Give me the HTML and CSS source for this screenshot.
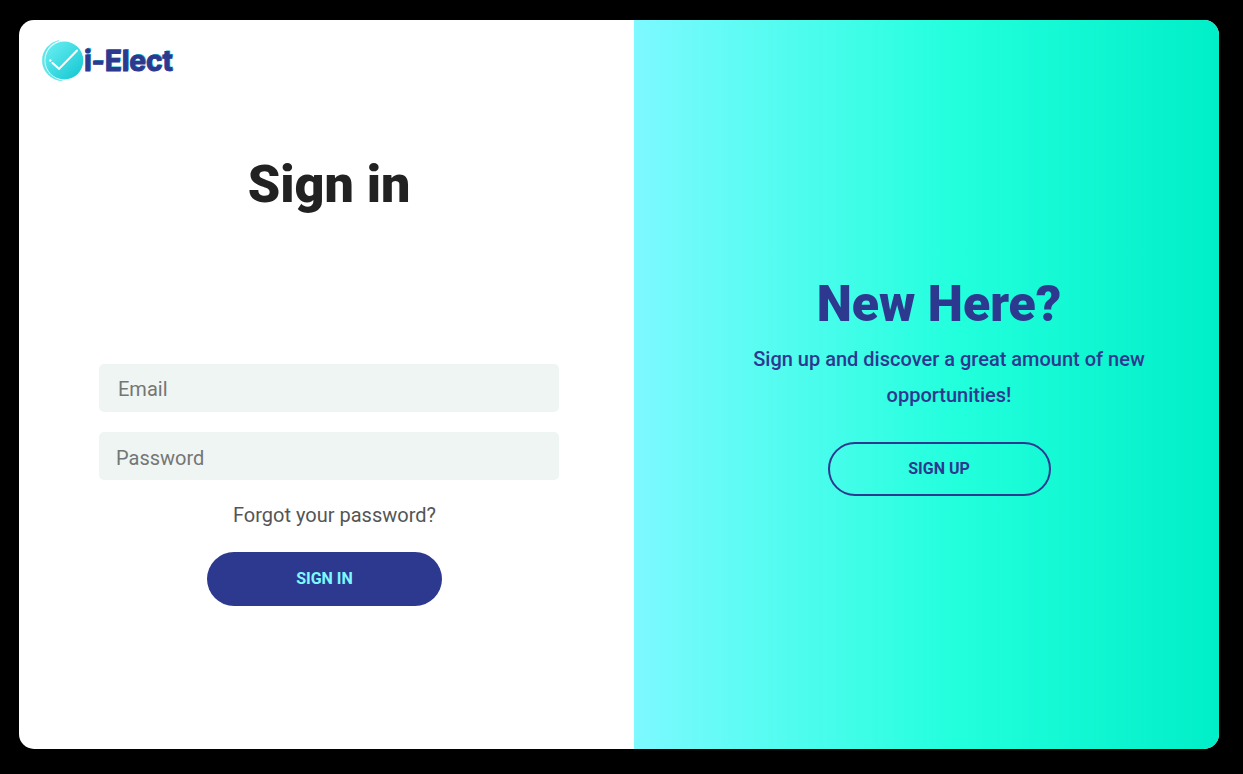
FILE: index.html
```html
<!DOCTYPE html>
<html lang="en">
<head>
<meta charset="utf-8">
<meta name="viewport" content="width=device-width, initial-scale=1">
<title>i-Elect - Sign in</title>
<link rel="stylesheet" href="styles.css">
</head>
<body>
<main class="card">
  <section class="login">
    <div class="brand">
      <svg class="brand-mark" viewBox="0 0 42 42" aria-hidden="true">
        <defs>
          <linearGradient id="disc" x1="0" y1="0" x2="1" y2="1">
            <stop offset="0" stop-color="#6df1f3"/>
            <stop offset="1" stop-color="#10c5d1"/>
          </linearGradient>
        </defs>
        <circle cx="22.300" cy="20.500" r="19" fill="url(#disc)"/>
        <path d="M17 0.600C7 2.500 0.300 11 0.300 20.500C0.300 31 9 40.500 20.500 40.800C10 38.500 2.300 30.500 2.300 20.500C2.300 11 8.500 3.500 17 0.600Z" fill="#63e5e8" stroke="#63e5e8" stroke-width="0.500"/>
        <path d="M10.500 23L17 28.900L35 10.500" fill="none" stroke="#fff" stroke-width="2.100" stroke-linecap="round" stroke-linejoin="miter"/>
        <circle cx="8.300" cy="20.500" r="1.200" fill="#fff"/>
      </svg>
      <span class="brand-name">i-Elect</span>
    </div>
    <form class="form">
      <h1 class="title">Sign in</h1>
      <input class="field field-email" type="email" placeholder="Email" aria-label="Email">
      <input class="field field-password" type="password" placeholder="Password" aria-label="Password">
      <a class="forgot" href="#">Forgot your password?</a>
      <button class="button button-primary" type="button">SIGN IN</button>
    </form>
  </section>
  <section class="promo">
    <h2 class="promo-title">New Here?</h2>
    <p class="promo-text">Sign up and discover a great amount of new opportunities!</p>
    <button class="button button-outline" type="button">SIGN UP</button>
  </section>
</main>
</body>
</html>
```
FILE: styles.css
```css
* {
  box-sizing: border-box;
}

body {
  margin: 0;
  min-height: 100vh;
  padding: 20px 24px 25px 19px;
  display: flex;
  background: #000;
  font-family: Roboto, "Liberation Sans", sans-serif;
}

.card {
  flex: 1;
  display: grid;
  grid-template-columns: 615fr 585fr;
  background: #fff;
  border-radius: 15px;
  overflow: hidden;
}

.login {
  padding: 20px 23px;
}

.brand {
  display: flex;
  align-items: center;
  height: 42px;
}

.brand-mark {
  width: 42px;
  height: 42px;
}

.brand-name {
  color: #2d388f;
  font-family: Inter, sans-serif;
  font-size: 28px;
  font-weight: 700;
  line-height: 40px;
  -webkit-text-stroke: 1px #2d388f;
  text-shadow: 1px -1px 0 #22b5cc;
}

.form {
  display: flex;
  flex-direction: column;
  align-items: center;
  padding: 71px 52px 0 57px;
}

.title {
  margin: 0 0 147px;
  color: #222;
  font-size: 52px;
  font-weight: 900;
  line-height: 64px;
}

.field {
  width: 100%;
  height: 48px;
  margin-bottom: 20px;
  padding: 2px 17px 0;
  border: 0;
  border-radius: 5px;
  background: #eef5f3;
  color: #333;
  font: 400 20px Roboto, sans-serif;
}

.field-email {
  padding-left: 19px;
}

.field-password {
  padding-top: 4px;
}

.forgot {
  padding-left: 11px;
  color: #555;
  font-size: 20px;
  line-height: 30px;
  text-decoration: none;
}

.field::placeholder {
  color: #757575;
}

.button {
  height: 54px;
  padding: 0 0 2px;
  border-radius: 27px;
  font: 700 16px Roboto, sans-serif;
  cursor: pointer;
}

.button-primary {
  width: 235px;
  margin: 22px 9px 0 0;
  border: 0;
  background: #2d388f;
  color: #7df9ff;
}

.promo {
  display: flex;
  flex-direction: column;
  align-items: center;
  padding: 252px 60px 0 85px;
  background: linear-gradient(90deg, #7df9ff, #22ffdd 55%, #00efc8);
  color: #2d388f;
}

.promo-title {
  margin: 0;
  font-size: 50px;
  font-weight: 900;
  line-height: 64px;
}

.promo-text {
  max-width: 420px;
  margin: 5px 0 29px;
  padding-left: 20px;
  font-size: 20px;
  font-weight: 500;
  line-height: 36px;
  text-align: center;
}

.button-outline {
  width: 223px;
  border: 2px solid #2d388f;
  background: transparent;
  color: #2d388f;
}
```
